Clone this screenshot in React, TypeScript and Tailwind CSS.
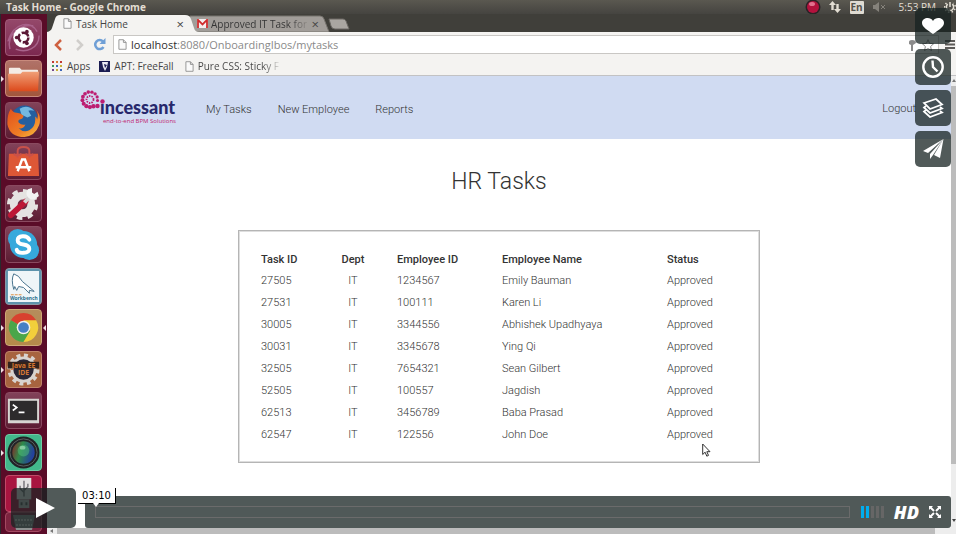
import React, { ReactNode } from "react";

const tasks = [
  ["27505", "IT", "1234567", "Emily Bauman", "Approved"],
  ["27531", "IT", "100111", "Karen Li", "Approved"],
  ["30005", "IT", "3344556", "Abhishek Upadhyaya", "Approved"],
  ["30031", "IT", "3345678", "Ying Qi", "Approved"],
  ["32505", "IT", "7654321", "Sean Gilbert", "Approved"],
  ["52505", "IT", "100557", "Jagdish", "Approved"],
  ["62513", "IT", "3456789", "Baba Prasad", "Approved"],
  ["62547", "IT", "122556", "John Doe", "Approved"],
];

function PageIcon() {
  return (
    <svg viewBox="0 0 10 12" className="h-[11px] w-[9px] shrink-0" fill="#fafafa" stroke="#8e8e8e" aria-hidden="true">
      <path d="M1 .7h5l3 3v7.6H1zM6 .7v3h3" />
    </svg>
  );
}

function TopPanel() {
  return (
    <div className="flex h-[14px] shrink-0 items-center justify-between bg-gradient-to-b from-[#5a5850] to-[#454440] pl-[6px] text-[#e3ded3]">
      <span className="font-['Open_Sans',sans-serif] text-[10px] font-bold leading-[14px]">Task Home - Google Chrome</span>
      <div className="flex items-center font-['Open_Sans',sans-serif] text-[10px] leading-[14px]">
        <svg viewBox="0 0 16 16" className="mr-[8px] size-[16px]" aria-hidden="true">
          <circle cx="8" cy="8" r="7.5" fill="#2b2226" />
          <circle cx="8" cy="8" r="6" fill="#b3123d" />
          <ellipse cx="7" cy="5" rx="3" ry="2" fill="#e2718f" />
        </svg>
        <svg viewBox="0 0 12 12" className="mr-[9px] size-[12px]" fill="#e3ded3" aria-hidden="true">
          <path d="M3.5 0L7 4H4.700v5H2.300V4H0zM8.500 12L12 8H9.700V3H7.300v5H5z" />
        </svg>
        <span className="mr-[9px] h-[13px] w-[14px] rounded-[1px] bg-[#dfdbd2] text-center font-bold leading-[13px] text-[#55534c]">En</span>
        <svg viewBox="0 0 13 10" className="mr-[13px] h-[10px] w-[13px]" fill="#85827b" stroke="#85827b" aria-hidden="true">
          <path stroke="none" d="M0 3h2l4-3v10L2 7H0z" />
          <path d="M8 3l4 4M12 3L8 7" />
        </svg>
        <span className="mr-[8px]">5:53 PM</span>
        <svg viewBox="0 0 12 12" className="size-[12px]" fill="none" stroke="#e3ded3" strokeWidth="1.500" aria-hidden="true">
          <path d="M3.700 3.200a3.600 3.600 0 1 0 4.600 0M6 1v5" />
          <path strokeDasharray="1.500 2" d="M2.500 2a5.300 5.300 0 1 0 7 0" />
        </svg>
      </div>
    </div>
  );
}

function LauncherTile({ tone, children, running, focused }: { tone: string; children: ReactNode; running?: boolean; focused?: boolean }) {
  return (
    <li className="relative flex justify-center even:mb-px">
      {running && (
        <svg viewBox="0 0 3 6" className="absolute left-0 top-[16px] h-[6px] w-[3px]" fill="#f3dfe6" aria-hidden="true">
          <path d="M0 0l3 3-3 3z" />
        </svg>
      )}
      <button className={`flex size-[37px] items-center justify-center rounded-[4px] border ${tone}`}>{children}</button>
      {focused && (
        <svg viewBox="0 0 3 6" className="absolute right-0 top-[16px] h-[6px] w-[3px]" fill="#f3dfe6" aria-hidden="true">
          <path d="M3 0L0 3l3 3z" />
        </svg>
      )}
    </li>
  );
}

function Launcher() {
  const wine = "border-[#8a4a60] bg-gradient-to-b from-[#824259] to-[#5c1c33]";
  return (
    <nav aria-label="Launcher" className="w-[47px] shrink-0 overflow-hidden border-l border-[#2a2a2e] bg-[#5a0c28] pt-[5px]">
      <ul className="flex flex-col gap-[4px] pr-px">
        <LauncherTile tone="border-[#a05a78] bg-gradient-to-b from-[#94486a] to-[#7c2850]">
          <svg viewBox="0 0 36 36" className="size-[35px]" aria-label="Dash">
            <path d="M2 22C8 2 26 0 32 12M4 30C0 14 16 4 28 6M34 16c0 14-14 18-24 14" stroke="#a8628a" fill="none" strokeWidth="1.500" />
            <circle cx="18" cy="18" r="10.500" fill="#fff" />
            <circle cx="18" cy="18" r="5" fill="none" stroke="#5b1936" strokeWidth="2.600" strokeDasharray="8.500 2" />
            <circle cx="11" cy="18" r="1.900" fill="#5b1936" />
            <circle cx="21.500" cy="12" r="1.900" fill="#5b1936" />
            <circle cx="21.500" cy="24" r="1.900" fill="#5b1936" />
          </svg>
        </LauncherTile>
        <LauncherTile running tone="border-[#c98a7c] bg-gradient-to-b from-[#b07268] to-[#a2563c]">
          <svg viewBox="0 0 36 36" className="size-[35px]" aria-label="Files">
            <defs>
              <linearGradient id="folder" x2="0" y2="1"><stop stopColor="#f0a078" /><stop offset="1" stopColor="#dc4a1c" /></linearGradient>
            </defs>
            <path d="M3 8q0-1 1-1h10l2 2h16q1 0 1 1v5H3z" fill="#f4ece6" />
            <path d="M2 13h13l2-2h17l-1 19q0 1-1 1H4q-1 0-1-1z" fill="url(#folder)" />
          </svg>
        </LauncherTile>
        <LauncherTile tone={wine}>
          <svg viewBox="0 0 36 36" className="size-[35px]" aria-label="Firefox">
            <defs>
              <linearGradient id="fox" x2="1" y2="1"><stop stopColor="#e2501c" /><stop offset=".6" stopColor="#ee7d25" /><stop offset="1" stopColor="#f9c440" /></linearGradient>
            </defs>
            <circle cx="19" cy="16" r="13.500" fill="#245f9f" />
            <path d="M14 6q8-5 15 2-4-1-6 0l3 5-4 2-6-3z" fill="#74b8e0" />
            <path d="M5 6q2 4 6 4 4 0 7 3 0 3-4 4-2 1-1 3 3 3 7 2-2 5-7 4 5 5 11 2 7-4 6-14 2 1 2 3 2-6-1-10 6 7 3 16-4 11-15 12Q4 35 1.500 22 1 12 5 6z" fill="url(#fox)" />
          </svg>
        </LauncherTile>
        <LauncherTile tone={wine}>
          <svg viewBox="0 0 36 36" className="size-[35px]" aria-label="Software Center">
            <path d="M3 10h30l1 23H2z" fill="#dd5736" />
            <path d="M12 14V7q0-4 6-4t6 4v7M8 10q3 4 8 0M20 10q5 4 8 0" fill="none" stroke="#c9514a" strokeWidth="2" />
            <path d="M12 28l4.500-12h3L24 28M10 24h16" fill="none" stroke="#fff" strokeWidth="2.500" />
          </svg>
        </LauncherTile>
        <LauncherTile tone={wine}>
          <svg viewBox="0 0 36 36" className="size-[35px]" aria-label="System Settings">
            <circle cx="17" cy="19" r="14" fill="none" stroke="#e5e3e1" strokeWidth="4" strokeDasharray="5.600 5.400" />
            <circle cx="17" cy="19" r="9" fill="none" stroke="#e5e3e1" strokeWidth="8" />
            <path d="M5 30L20 16" stroke="#bd1836" strokeWidth="6" strokeLinecap="round" />
            <path d="M19 17l7-8" stroke="#d8d6d6" strokeWidth="4" />
            <path d="M23 4q-3 5 1 8t9-2l-1-3-3 2-3-2 0-4z" stroke="#f3f3f3" strokeWidth="1.500" fill="#f3f3f3" />
          </svg>
        </LauncherTile>
        <LauncherTile tone={wine}>
          <svg viewBox="0 0 36 36" className="size-[35px]" aria-label="Skype">
            <circle cx="12" cy="12" r="10" fill="#36a9dc" />
            <circle cx="24" cy="24" r="10" fill="#36a9dc" />
            <circle cx="18" cy="18" r="14" fill="#36a9dc" />
            <path d="M24 13q-2-4-7-3.500-5 .5-5 4t6 4.500 6 4.500-6 4-7-3" stroke="#fff" strokeWidth="4" fill="none" strokeLinecap="round" />
          </svg>
        </LauncherTile>
        <LauncherTile tone="border-[#8a98a4] bg-[#5d93ac]">
          <svg viewBox="0 0 36 36" className="size-[35px]" aria-label="MySQL Workbench">
            <path d="M2 2h32v32H2z" fill="#eef5f8" />
            <path d="M8 21Q5 11 8 5q5 1 9 8l12 10-5-1 0 3-6-6-5-1-2 4-2-4z" fill="#fff" stroke="#44708a" />
            <text x="4" y="32" fontSize="5" fontWeight="700" fill="#276c8a" fontFamily="Open Sans, sans-serif">Workbench</text>
            <path d="M5 26.500h12" stroke="#dd9144" strokeDasharray="3 1" />
          </svg>
        </LauncherTile>
        <LauncherTile running focused tone="border-[#cda877] bg-gradient-to-b from-[#b58c5c] to-[#b58a4a]">
          <svg viewBox="0 0 36 36" className="size-[35px]" aria-label="Chrome">
            <path d="M18 18L5 10.500A15 15 0 0 1 31 10.500z" fill="#d8412f" />
            <path d="M18 18L5 10.500A15 15 0 0 0 18 33l7-11z" fill="#4aa64a" />
            <path d="M18 10.500h13A15 15 0 0 1 18 33l7-12z" fill="#f2cf3b" />
            <circle cx="18" cy="18" r="7" fill="#f1f1ee" />
            <circle cx="18" cy="18" r="5.500" fill="#4680c4" />
          </svg>
        </LauncherTile>
        <LauncherTile running tone="border-[#c08469] bg-[#a7643f]">
          <svg viewBox="0 0 36 36" className="size-[35px]" aria-label="Java EE IDE">
            <circle cx="18" cy="18" r="14.500" fill="none" stroke="#d8d3cf" strokeWidth="4" strokeDasharray="4 3.590" />
            <circle cx="18" cy="18" r="12" fill="#2a2635" stroke="#d8d3cf" strokeWidth="3" />
            <path d="M2 10h32v7H2z" fill="#33221c" />
            <text x="18" y="16" textAnchor="middle" fontSize="7" fontWeight="700" fill="#d67734" fontFamily="Open Sans, sans-serif">
              Java EE
              <tspan x="18" dy="8">IDE</tspan>
            </text>
          </svg>
        </LauncherTile>
        <LauncherTile tone={wine}>
          <svg viewBox="0 0 36 36" className="size-[35px]" aria-label="Terminal">
            <path d="M2 6h32v25H2z" fill="#d7d5d2" />
            <path d="M4 8h28v20H4z" fill="#2d2b2c" />
            <path d="M7 12l4 3-4 3M13 20h6" stroke="#fff" strokeWidth="1.800" fill="none" />
          </svg>
        </LauncherTile>
        <LauncherTile running tone="border-[#70caa4] bg-[#42b88b]">
          <svg viewBox="0 0 36 36" className="size-[35px]" aria-label="Screen Recorder">
            <defs>
              <linearGradient id="lens" y2=".3"><stop stopColor="#8a2026" /><stop offset=".45" stopColor="#2f8a4a" /><stop offset="1" stopColor="#23429d" /></linearGradient>
            </defs>
            <circle cx="18" cy="18" r="16.500" fill="#202426" />
            <circle cx="18" cy="18" r="14" fill="none" stroke="#5b6263" />
            <circle cx="18" cy="18" r="11.500" fill="url(#lens)" />
            <circle cx="18" cy="16" r="6" fill="#4fc07c" opacity=".5" />
            <ellipse cx="17" cy="13" rx="3" ry="2" fill="#b4e8c4" opacity=".6" />
          </svg>
        </LauncherTile>
        <LauncherTile tone="border-[#c04a68] bg-[#a81540]">
          <svg viewBox="0 0 36 36" className="size-[35px]" aria-label="USB Drive">
            <path d="M11 2h15v22H11z" fill="#e4e2e2" />
            <path d="M13 24h11v9H13z" fill="#bdbdbd" />
            <path d="M18.500 21V5M18.500 17l-4-4V10M18.500 15l4-4V8" stroke="#77757a" fill="none" strokeWidth="1.500" />
            <path d="M15 27h2v3h-2zM20 27h2v3h-2z" fill="#55575a" />
          </svg>
        </LauncherTile>
        <li className="-mt-[5px] flex justify-center">
          <button aria-label="Trash" className="flex h-[20px] w-[37px] items-center justify-center rounded-[4px] border border-[#a34a62] bg-[#7c2440]">
            <svg viewBox="0 0 22 16" className="h-[16px] w-[22px]" aria-hidden="true">
              <path d="M0 1h22l-3 15H3z" fill="#8d9190" />
              <path d="M2 6h18M3 11h16" stroke="#c6cac8" strokeWidth="2" strokeDasharray="2 1" />
            </svg>
          </button>
        </li>
      </ul>
    </nav>
  );
}

function BrowserChrome() {
  return (
    <div className="shrink-0 font-['Open_Sans',sans-serif] text-[10px] font-medium text-[#444]">
      <div className="relative flex h-[18px] items-end bg-[#403f3a]">
        <svg viewBox="0 0 310 17" className="absolute bottom-0 left-0 h-[17px] w-[310px]" aria-hidden="true">
          <path d="M143 1h130q3 0 4 3l5 13H143z" fill="#a19d99" stroke="#77746f" />
          <path d="M282 4h14q2 0 3 2l3 8h-14q-3 0-4-3z" fill="#aaa6a1" stroke="#6c6964" />
          <path d="M0 17q4-1 5-4l3-9q1-4 5-4h125q5 0 6 4l3 9q1 4 5 4z" fill="#f4f3f1" />
        </svg>
        <button className="relative flex h-[17px] w-[137px] items-center pl-[16px] leading-[16px]">
          <PageIcon />
          <span className="ml-[4px]">Task Home</span>
          <span className="ml-auto text-[13px]">×</span>
        </button>
        <button className="relative flex h-[17px] w-[135px] items-center pl-[13px] leading-[16px]">
          <svg viewBox="0 0 12 10" className="h-[9px] w-[11px] shrink-0" aria-label="Gmail">
            <path d="M0 0h12v10H0z" fill="#f4eeee" />
            <path d="M1 10V1l5 5 5-5v9" fill="none" stroke="#cf2b2c" strokeWidth="2" />
          </svg>
          <span className="ml-[3px] whitespace-nowrap bg-gradient-to-r from-[#333] from-80% to-[#8f8b87] bg-clip-text text-left text-transparent">Approved IT Task for</span>
          <span className="ml-auto text-[13px]">×</span>
        </button>
      </div>
      <div className="flex h-[25px] items-center bg-[#f4f3f1] pl-[7px] pr-px">
        <button aria-label="Back">
          <svg viewBox="0 0 8 12" className="h-[12px] w-[8px]" fill="none" stroke="#cf6140" strokeWidth="2.500" aria-hidden="true"><path d="M7 1L2 6l5 5" /></svg>
        </button>
        <button aria-label="Forward" className="ml-[14px]">
          <svg viewBox="0 0 8 12" className="h-[12px] w-[8px]" fill="none" stroke="#d0cecb" strokeWidth="2.500" aria-hidden="true"><path d="M1 1l5 5-5 5" /></svg>
        </button>
        <button aria-label="Reload" className="ml-[9px]">
          <svg viewBox="0 0 13 13" className="size-[13px]" fill="none" stroke="#6f9fd6" strokeWidth="2.500" aria-hidden="true">
            <path d="M10 3.500A4.500 4.500 0 1 0 10.500 9" />
            <path d="M12.500 0v6h-6z" fill="#6f9fd6" stroke="none" />
          </svg>
        </button>
        <div className="ml-[7px] flex h-[19px] min-w-0 flex-1 items-center gap-[4px] border border-[#c9c7c4] bg-white pl-[4px] text-[11px] font-normal text-[#8a8a8a]">
          <PageIcon />
          <div role="textbox" aria-label="Address" className="pt-px"><span className="text-[#2f2f2f]">localhost</span>:8080/OnboardingIbos/mytasks</div>
          <svg viewBox="0 0 30 12" className="ml-auto h-[12px] w-[30px]" aria-hidden="true">
            <path d="M1 3q0-2 3-2 4 0 4 3L5 6v6H3V6L1 5z" fill="#8b8b8b" />
            <path d="M20 .7l1.600 3.700 4 .4-3 2.700.9 4L20 9.500l-3.500 2 .9-4-3-2.700 4-.4z" fill="#fff" stroke="#8b8b8b" />
          </svg>
        </div>
        <button aria-label="Menu" className="ml-[6px]">
          <svg viewBox="0 0 10 9" className="h-[9px] w-[10px]" stroke="#5c5a58" strokeWidth="2" aria-hidden="true"><path d="M0 1h10M0 4.500h10M0 8h10" /></svg>
        </button>
      </div>
      <div className="flex h-[19px] items-center border-b border-[#c2c2c4] bg-[#f4f3f1] pl-[5px] leading-[18px]">
        <svg viewBox="0 0 10 10" className="size-[10px]" aria-hidden="true">
          <path d="M0 0h2v2H0zM8 0h2v2H8z" fill="#c23a36" />
          <path d="M4 0h2v2H4z" fill="#d87a37" />
          <path d="M0 4h2v2H0z" fill="#3f9c60" />
          <path d="M4 4h2v2H4zM8 8h2v2H8z" fill="#3d66b8" />
          <path d="M8 4h2v2H8zM4 8h2v2H4z" fill="#c9b23a" />
          <path d="M0 8h2v2H0z" fill="#74478e" />
        </svg>
        <a href="#apps" className="ml-[5px]">Apps</a>
        <svg viewBox="0 0 11 11" className="ml-[9px] size-[11px]" aria-hidden="true">
          <path d="M0 0h11v11H0z" fill="#1b1d52" />
          <path d="M3 1h6l-1 5-2 4-2-4z" fill="#e9e9f2" />
          <path d="M5 3l3 1-2 3z" fill="#1b1d52" />
        </svg>
        <a href="#freefall" className="ml-[4px]">APT: FreeFall</a>
        <span className="ml-[11px] flex"><PageIcon /></span>
        <a href="#sticky" className="ml-[4px] whitespace-nowrap bg-gradient-to-r from-[#444] from-80% to-[#dddcda] bg-clip-text text-transparent">Pure CSS: Sticky F</a>
      </div>
    </div>
  );
}

function Logo() {
  const dots = Array.from({ length: 12 }, (_, i) => {
    const a = (i / 13) * Math.PI * 2 + 1.1;
    return [10 + Math.cos(a) * 7.6, 9.500 + Math.sin(a) * 7.6, 2.2 - i * 0.06];
  });
  return (
    <svg viewBox="0 0 98 36" className="h-[36px] w-[98px]" role="img" aria-label="Incessant, end-to-end BPM Solutions">
      <circle cx="10" cy="9.500" r="3.500" fill="none" stroke="#bd1d72" strokeWidth="1.800" strokeDasharray="1.500 1" />
      <text x="20" y="24" fontFamily="Lato, sans-serif" fontSize="18" fontWeight="900" fill="#27286c">incessant</text>
      <text x="23" y="33" fontFamily="Open Sans, sans-serif" fontSize="6" fontWeight="400" fill="#c01f70">end-to-end BPM Solutions</text>
      <path d="M19 9h7v4.500h-7z" fill="#d0dbf2" />
      <g fill="#bd1d72">
        {dots.map(([x, y, r], i) => <circle key={i} cx={x} cy={y} r={r} />)}
        <circle cx="22.500" cy="11.500" r="2.200" />
        <circle cx="17.500" cy="16" r="2.200" />
      </g>
    </svg>
  );
}

function TasksPage() {
  return (
    <div className="min-w-0 flex-1 font-[Roboto,sans-serif] text-[11px] text-[#333]">
      <header className="flex h-[63px] items-center justify-between bg-[#d0dbf2] pl-[33px] pr-[35px]">
        <div className="flex items-center">
          <Logo />
          <nav aria-label="Main" className="ml-[28px] flex gap-[26px] pt-[6px] font-light">
            <a href="#tasks">My Tasks</a>
            <a href="#new">New Employee</a>
            <a href="#reports">Reports</a>
          </nav>
        </div>
        <a href="#logout" className="pt-[3px] font-light">Logout</a>
      </header>
      <main className="flex flex-col items-center">
        <h1 className="mt-[27px] text-[23px] font-light leading-[32px]">HR Tasks</h1>
        <section className="mt-[32px] w-[522px] max-w-full border border-[#b5b5b5] px-[22px] pb-[16px] pt-[19px] outline outline-1 -outline-offset-2 outline-[#dedede]">
          <table className="h-[196px] w-full table-fixed text-left">
            <colgroup>
              <col className="w-[68px]" />
              <col className="w-[48px]" />
              <col className="w-[125px]" />
              <col className="w-[165px]" />
              <col />
            </colgroup>
            <thead>
              <tr className="h-[20px] [&>th:nth-child(2)]:text-center [&>th:nth-child(3)]:pl-[20px] [&>th]:p-0 [&>th]:font-medium">
                <th>Task ID</th><th>Dept</th><th>Employee ID</th><th>Employee Name</th><th>Status</th>
              </tr>
            </thead>
            <tbody>
              {tasks.map((row) => (
                <tr key={row[0]} className="h-[20px] font-light [&>td:nth-child(2)]:text-center [&>td:nth-child(3)]:pl-[20px] [&>td]:p-0">
                  {row.map((cell, i) => <td key={i}>{cell}</td>)}
                </tr>
              ))}
            </tbody>
          </table>
        </section>
      </main>
    </div>
  );
}

function ActionButton({ label, children }: { label: string; children: ReactNode }) {
  return (
    <button aria-label={label} className="flex size-[36px] items-center justify-center rounded-[5px] bg-[#172322]/75 text-white">
      {children}
    </button>
  );
}

function PlayerOverlay() {
  return (
    <>
      <div className="absolute right-[5px] top-[8px] flex flex-col gap-[5px]">
        <ActionButton label="Like">
          <svg viewBox="0 0 22 16" className="h-[16px] w-[22px]" fill="currentColor" aria-hidden="true">
            <path d="M11 16C6 12.500 0 9 0 5c0-5 8-7 11-2 3-5 11-3 11 2 0 4-6 7.500-11 11z" />
          </svg>
        </ActionButton>
        <ActionButton label="Watch later">
          <svg viewBox="0 0 22 22" className="size-[22px]" fill="none" stroke="currentColor" strokeWidth="2.400" aria-hidden="true">
            <circle cx="11" cy="11" r="9.700" />
            <path d="M10.500 4.500L11 11l4.500 4.500" />
          </svg>
        </ActionButton>
        <ActionButton label="Add to collections">
          <svg viewBox="0 0 22 22" className="size-[22px]" fill="none" stroke="currentColor" strokeWidth="1.800" aria-hidden="true">
            <path d="M2 6l12-4 6 5.500L8 12z" />
            <path d="M4 9l-2 1.500L8 16l12-4.500L18 10M4 13l-2 1.500L8 20l12-4.500L18 14" />
          </svg>
        </ActionButton>
        <ActionButton label="Share">
          <svg viewBox="0 0 21 20" className="h-[20px] w-[21px]" fill="currentColor" aria-hidden="true">
            <path d="M20.500 0L0 12l5 2zM20.500 0L7 15v5l3-4zM20.500 0L11 16l6 3z" />
          </svg>
        </ActionButton>
      </div>
      <div className="absolute bottom-[6px] left-[11px] right-[5px] flex items-end gap-[9px]">
        <button aria-label="Play" className="flex h-[40px] w-[65px] items-center justify-center rounded-[5px] bg-[#172322]/75 pl-[4px]">
          <svg viewBox="0 0 19 20" className="h-[20px] w-[19px]" fill="#fff" aria-hidden="true"><path d="M0 0l19 10L0 20z" /></svg>
        </button>
        <div className="relative flex h-[32px] flex-1 items-center rounded-[3px] bg-[#505958] pl-[10px] pr-[10px]">
          <div className="h-[12px] flex-1 border border-[#6b6b6b]" />
          <div className="absolute -left-[7px] -top-[8px] h-[16px] w-[38px] border-b border-r border-black bg-white text-center font-['DejaVu_Sans',sans-serif] text-[10px] leading-[15px] text-black">03:10</div>
          <svg viewBox="0 0 6 4" className="absolute left-[8px] top-[7px] h-[4px] w-[6px]" fill="#fff" aria-hidden="true"><path d="M0 0h6L3 4z" /></svg>
          <button aria-label="Volume" className="ml-[11px] flex gap-[2px]">
            <span className="h-[12px] w-[3px] bg-[#00adef]" />
            <span className="h-[12px] w-[3px] bg-[#00adef]" />
            <span className="h-[12px] w-[3px] bg-[#666]" />
            <span className="h-[12px] w-[3px] bg-[#666]" />
            <span className="h-[12px] w-[3px] bg-[#666]" />
          </button>
          <button className="ml-[10px] font-['Open_Sans',sans-serif] text-[18px] font-extrabold italic leading-[20px] text-white">HD</button>
          <button aria-label="Full screen" className="ml-[10px]">
            <svg viewBox="0 0 12 12" className="size-[12px]" fill="#fff" stroke="#fff" strokeWidth="2" aria-hidden="true">
              <path stroke="none" d="M0 0h4L0 4zM12 0v4L8 0zM0 12V8l4 4zM12 12H8l4-4z" />
              <path d="M1 1l4 4M11 1L7 5M1 11l4-4M11 11L7 7" />
            </svg>
          </button>
        </div>
      </div>
    </>
  );
}

export default function App() {
  return (
    <div className="relative flex h-screen flex-col overflow-hidden bg-white">
      <TopPanel />
      <div className="flex min-h-0 flex-1">
        <Launcher />
        <div className="flex min-w-0 flex-1 flex-col">
          <BrowserChrome />
          <div className="flex min-h-0 flex-1">
            <TasksPage />
            <div className="flex w-[5px] shrink-0 flex-col items-center bg-[#ededed] pb-[6px]">
              <svg viewBox="0 0 4 3" className="mt-[3px] h-[3px] w-[4px]" fill="#777" aria-hidden="true"><path d="M0 3l2-3 2 3z" /></svg>
              <div className="mt-[4px] h-[378px] w-full bg-[#bcbcbc]" />
              <svg viewBox="0 0 4 3" className="mt-auto h-[3px] w-[4px]" fill="#444" aria-hidden="true"><path d="M0 0l2 3 2-3z" /></svg>
            </div>
          </div>
          <div className="flex h-[6px] shrink-0 items-center bg-[#ededed] pl-[3px]">
            <svg viewBox="0 0 3 4" className="h-[4px] w-[3px]" fill="#777" aria-hidden="true"><path d="M3 0L0 2l3 2z" /></svg>
            <div className="ml-[4px] mr-[21px] h-full flex-1 bg-[#bcbcbc]" />
          </div>
        </div>
      </div>
      <svg viewBox="0 0 9 14" className="absolute left-[702px] top-[443px] h-[14px] w-[9px]" fill="#fff" stroke="#333" aria-hidden="true">
        <path d="M.7 1v10.500l2.400-2.300 1.700 4 1.700-.8-1.700-3.700H8z" />
      </svg>
      <PlayerOverlay />
    </div>
  );
}
